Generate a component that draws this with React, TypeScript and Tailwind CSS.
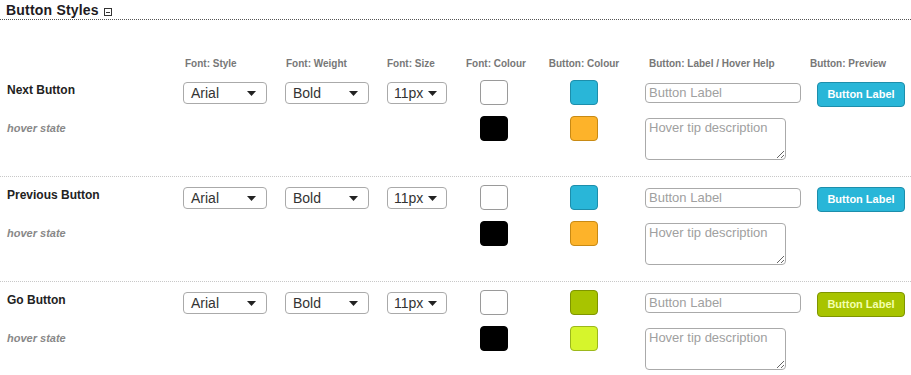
import React from 'react';

type Row = {
  name: string;
  fill: string;
  fillBorder: string;
  hover: string;
  hoverBorder: string;
  text: string;
};

const ROWS: Row[] = [
  { name: 'Next Button', fill: '#29b6d8', fillBorder: '#1d8eab', hover: '#fdb32a', hoverBorder: '#c88a14', text: '#ffffff' },
  { name: 'Previous Button', fill: '#29b6d8', fillBorder: '#1d8eab', hover: '#fdb32a', hoverBorder: '#c88a14', text: '#ffffff' },
  { name: 'Go Button', fill: '#a8c400', fillBorder: '#7f9500', hover: '#d6f52c', hoverBorder: '#9cb81c', text: '#f4ffae' },
];

function FakeSelect({ value, width, pad }: { value: string; width: string; pad: string }) {
  return (
    <div
      className={`${width} ${pad} h-[22px] mt-[2px] flex items-center justify-between border border-[#aaa] rounded-[4px] bg-white text-[14px] text-[#333]`}
    >
      <span className="leading-none">{value}</span>
      <svg width="9" height="5" viewBox="0 0 9 5">
        <path d="M0 0h9L4.5 5z" fill="#222" />
      </svg>
    </div>
  );
}

function Swatch({ bg, border }: { bg: string; border: string }) {
  return (
    <div
      className="w-[28px] h-[25px] rounded-[4px] border"
      style={{ backgroundColor: bg, borderColor: border }}
    />
  );
}

export default function App() {
  return (
    <div className="w-[911px] h-[375px] overflow-hidden bg-white font-['Liberation_Sans',Arial,sans-serif]">
      {/* Title */}
      <div className="h-[20px] border-b border-dotted border-[#555] flex items-start pl-[6px] pt-[3px]">
        <span className="text-[14px] leading-[15px] font-bold text-[#1e1b22] tracking-[0.2px]">Button Styles</span>
        <span className="ml-[5px] mt-[5px] w-[8px] h-[8px] border border-[#333] flex items-center justify-center">
          <span className="w-[4px] h-[1px] bg-[#333]" />
        </span>
      </div>

      {/* Column headers */}
      <div className="mt-[38px] flex text-[10px] leading-[12px] font-bold text-[#777] h-[13px]">
        <div className="w-[185px]" />
        <div className="w-[101px]">Font: Style</div>
        <div className="w-[101px]">Font: Weight</div>
        <div className="w-[75px]">Font: Size</div>
        <div className="w-[68px] text-center">Font: Colour</div>
        <div className="w-[108px] text-center">Button: Colour</div>
        <div className="w-[172px] pl-[11px]">Button: Label / Hover Help</div>
        <div>Button: Preview</div>
      </div>

      {ROWS.map((row, i) => (
        <div
          key={row.name}
          className={`h-[105px] border-t border-dotted ${i === 0 ? 'border-transparent' : 'border-[#c8c8c8]'} pt-[8px]`}
        >
          {/* main state */}
          <div className="h-[36px] flex items-start">
            <div className="w-[183px] pl-[7px] mt-[3px] text-[12px] leading-[14px] font-bold text-[#222]">
              {row.name}
            </div>
            <div className="w-[102px]">
              <FakeSelect value="Arial" width="w-[84px]" pad="pl-[7px] pr-[10px]" />
            </div>
            <div className="w-[102px]">
              <FakeSelect value="Bold" width="w-[84px]" pad="pl-[7px] pr-[10px]" />
            </div>
            <div className="w-[75px]">
              <FakeSelect value="11px" width="w-[60px]" pad="pl-[6px] pr-[9px]" />
            </div>
            <div className="w-[68px] flex justify-center pr-[4px]">
              <Swatch bg="#ffffff" border="#9a9a9a" />
            </div>
            <div className="w-[108px] flex justify-center">
              <Swatch bg={row.fill} border={row.fillBorder} />
            </div>
            <div className="w-[179px] pl-[7px]">
              <input
                placeholder="Button Label"
                className="mt-[2px] w-[156px] h-[20px] border border-[#aaa] rounded-[4px] px-[3px] text-[13px] text-[#333] placeholder:text-[#a0a0a0] outline-none"
              />
            </div>
            <div className="mt-[2px]">
              <div
                className="w-[88px] h-[25px] rounded-[4px] border flex items-center justify-center text-[11px] font-bold"
                style={{ backgroundColor: row.fill, borderColor: row.fillBorder, color: row.text }}
              >
                Button Label
              </div>
            </div>
          </div>

          {/* hover state */}
          <div className="h-[60px] flex items-start">
            <div className="w-[462px] pl-[7px] mt-[5px] text-[11px] leading-[14px] font-bold italic text-[#888]">
              hover state
            </div>
            <div className="w-[68px] flex justify-center pr-[4px]">
              <Swatch bg="#000000" border="#000000" />
            </div>
            <div className="w-[108px] flex justify-center">
              <Swatch bg={row.hover} border={row.hoverBorder} />
            </div>
            <div className="pl-[7px]">
              <textarea
                placeholder="Hover tip description"
                className="block mt-[2px] w-[141px] h-[42px] border border-[#aaa] rounded-[4px] px-[3px] py-[1px] text-[13px] leading-[15px] text-[#333] placeholder:text-[#a0a0a0] outline-none"
              />
            </div>
          </div>
        </div>
      ))}
    </div>
  );
}
